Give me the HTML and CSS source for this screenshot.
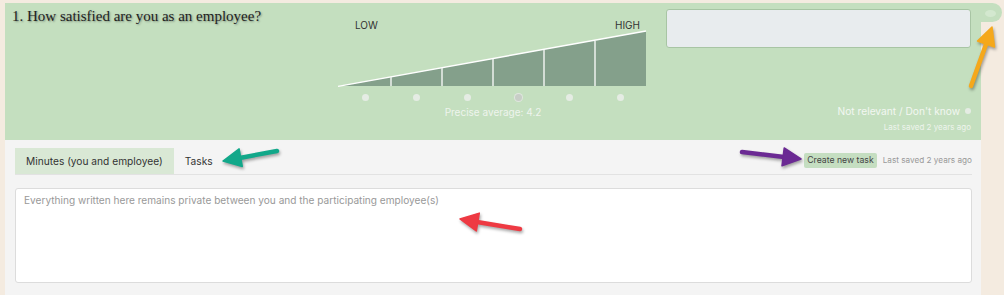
FILE: index.html
```html
<!DOCTYPE html>
<html lang="en">
<head>
    <meta charset="UTF-8">
    <title>Employee conversation</title>
    <link rel="stylesheet" href="styles.css">
</head>
<body>
    <div class="page">
        <div class="question">
            <h2 class="question-title">1. How satisfied are you as an employee?</h2>

            <div class="scale">
                <div class="scale-labels">
                    <span>LOW</span>
                    <span>HIGH</span>
                </div>
                <svg class="scale-chart" width="306" height="58" viewBox="0 0 306 58">
                    <polygon points="0,56 306,1 306,56" fill="#84a08b"/>
                    <line x1="-2" y1="56.4" x2="306" y2="1" stroke="#fff" stroke-width="1.4"/>
                    <g stroke="#eef2ee" stroke-width="1.5">
                        <line x1="51" y1="47" x2="51" y2="56"/>
                        <line x1="102" y1="38" x2="102" y2="56"/>
                        <line x1="153" y1="29" x2="153" y2="56"/>
                        <line x1="204" y1="20" x2="204" y2="56"/>
                        <line x1="255" y1="11" x2="255" y2="56"/>
                    </g>
                </svg>
                <div class="scale-dots">
                    <span class="dot"></span>
                    <span class="dot"></span>
                    <span class="dot"></span>
                    <span class="dot dot-selected"></span>
                    <span class="dot"></span>
                    <span class="dot"></span>
                </div>
                <div class="scale-average">Precise average: 4.2</div>
            </div>

            <div class="side">
                <div class="comment-box"></div>
                <div class="not-relevant">Not relevant / Don't know <span class="dot small"></span></div>
                <div class="saved">Last saved 2 years ago</div>
            </div>

            <div class="handle"><span></span></div>
        </div>

        <div class="notes">
            <div class="tabs">
                <div class="tab active">Minutes (you and employee)</div>
                <div class="tab">Tasks</div>
                <div class="tabs-right">
                    <button class="new-task">Create new task</button>
                    <span class="saved-grey">Last saved 2 years ago</span>
                </div>
            </div>
            <textarea class="notes-text" placeholder="Everything written here remains private between you and the participating employee(s)"></textarea>
        </div>
    </div>

    <!-- annotation arrows -->
    <svg class="arrows" width="1004" height="295" viewBox="0 0 1004 295">
        <g fill="#12a88a" stroke="#12a88a">
            <line x1="277" y1="151" x2="241" y2="157.7" stroke-width="4.5" stroke-linecap="round"/>
            <polygon points="223,161 239.1,148.9 242.3,166.5" stroke-width="1.5" stroke-linejoin="round"/>
        </g>
        <g fill="#6b2a93" stroke="#6b2a93">
            <line x1="742" y1="152" x2="784" y2="157" stroke-width="4.5" stroke-linecap="round"/>
            <polygon points="801,159 782,165.8 784.2,148" stroke-width="1.5" stroke-linejoin="round"/>
        </g>
        <g fill="#ee3a43" stroke="#ee3a43">
            <line x1="520" y1="229" x2="477" y2="222" stroke-width="4.5" stroke-linecap="round"/>
            <polygon points="460,219 479.3,213.1 476.3,230.9" stroke-width="1.5" stroke-linejoin="round"/>
        </g>
        <g fill="#f5a81c" stroke="#f5a81c">
            <line x1="971" y1="86" x2="986.5" y2="43" stroke-width="4.5" stroke-linecap="round"/>
            <polygon points="992,27 994.5,47 977.5,41" stroke-width="1.5" stroke-linejoin="round"/>
        </g>
    </svg>
</body>
</html>
```

FILE: styles.css
```css
body {
    margin: 0;
    background: #f4ebe0;
    font-family: 'Inter', 'Roboto', sans-serif;
    color: #333;
    overflow: hidden;
}

.page {
    width: 976px;
    padding: 3px 0 0 5px;
}

/* question block */

.question {
    position: relative;
    display: flex;
    height: 137px;
    padding: 0 10px 0 7px;
    background: #c4dfbf;
    box-sizing: border-box;
}

.question-title {
    width: 328px;
    margin: 3px 0 0;
    font-family: 'Liberation Serif', serif;
    font-size: 15px;
    font-weight: normal;
    line-height: 20px;
    color: #222;
    text-shadow: 1px 1px 2px rgba(0, 0, 0, 0.35);
}

.scale {
    width: 306px;
    padding-top: 17px;
}

.scale-labels {
    display: flex;
    justify-content: space-between;
    padding: 0 6px 0 15px;
    font-size: 10px;
    line-height: 10px;
    color: #333;
}

.scale-chart {
    display: block;
    overflow: visible;
}

.scale-dots {
    display: grid;
    grid-template-columns: repeat(6, 1fr);
    justify-items: center;
    margin-top: 6px;
}

.dot {
    display: inline-block;
    width: 7px;
    height: 7px;
    border-radius: 50%;
    background: #e5ece4;
}

.dot-selected {
    background: #c8cec7;
    box-shadow: 0 0 0 1px #dfe6de;
}

.dot.small {
    width: 6px;
    height: 6px;
    margin-left: 2px;
    vertical-align: 1px;
}

.scale-average {
    margin-top: 5px;
    text-align: center;
    font-size: 10px;
    color: #eef4ed;
}

.side {
    flex: 1;
    margin-left: 20px;
    padding-top: 6px;
    text-align: right;
}

.comment-box {
    height: 39px;
    background: #e8ecee;
    border: 1px solid #a8c5a4;
    border-radius: 3px;
    box-sizing: border-box;
}

.not-relevant {
    margin-top: 56px;
    font-size: 10.2px;
    line-height: 14px;
    color: #f3f7f2;
}

.saved {
    margin-top: 4px;
    font-size: 8px;
    color: #eef4ed;
}

.handle {
    position: absolute;
    left: 100%;
    top: 0;
    width: 21px;
    height: 19px;
    background: #c4dfbf;
    border-radius: 0 10px 10px 0;
}

.handle span {
    position: absolute;
    left: 4px;
    top: 7px;
    width: 11px;
    height: 7px;
    border-radius: 50%;
    background: #d3e8cf;
}

/* notes block */

.notes {
    height: 160px;
    padding: 8px 9px 0 10px;
    background: #f4f4f4;
}

.tabs {
    display: flex;
    align-items: stretch;
    height: 26px;
    border-bottom: 1px solid #e2e2e2;
}

.tab {
    padding: 0 11px;
    font-size: 10.2px;
    line-height: 26px;
    color: #333;
}

.tab.active {
    background: #d9e8d5;
}

.tabs-right {
    display: flex;
    align-items: center;
    margin-left: auto;
    padding-bottom: 2px;
}

.new-task {
    height: 15px;
    padding: 0 3px;
    border: none;
    border-radius: 2px;
    background: #c5dec1;
    font-family: inherit;
    font-size: 8.7px;
    color: #444;
}

.saved-grey {
    margin-left: 6px;
    font-size: 8.2px;
    color: #999;
}

.notes-text {
    display: block;
    width: 100%;
    height: 95px;
    margin-top: 13px;
    padding: 5px 8px;
    border: 1px solid #dcdcdc;
    border-radius: 3px;
    background: #fff;
    box-sizing: border-box;
    font-family: inherit;
    font-size: 10.1px;
    resize: none;
}

.notes-text::placeholder {
    color: #999;
}

.arrows {
    position: absolute;
    left: 0;
    top: 0;
    pointer-events: none;
    filter: drop-shadow(1px 2px 1.5px rgba(0, 0, 0, 0.35));
}
```
